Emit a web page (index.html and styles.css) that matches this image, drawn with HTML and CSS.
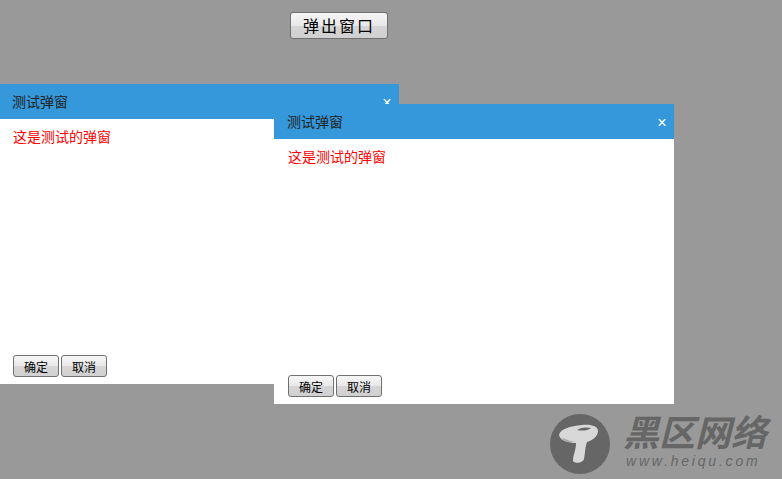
FILE: index.html
```html
<!DOCTYPE html>
<html lang="zh">
<head>
    <meta charset="UTF-8">
    <title>弹出窗口</title>
    <link rel="stylesheet" href="styles.css">
</head>
<body>

<div class="toolbar">
    <button class="open-button">弹出窗口</button>
</div>

<div class="dialog dialog-first">
    <div class="dialog-header">
        <span class="dialog-title">测试弹窗</span>
        <span class="dialog-close">×</span>
    </div>
    <div class="dialog-body">这是测试的弹窗</div>
    <div class="dialog-footer">
        <button class="dialog-button">确定</button>
        <button class="dialog-button">取消</button>
    </div>
</div>

<div class="dialog dialog-second">
    <div class="dialog-header">
        <span class="dialog-title">测试弹窗</span>
        <span class="dialog-close">×</span>
    </div>
    <div class="dialog-body">这是测试的弹窗</div>
    <div class="dialog-footer">
        <button class="dialog-button">确定</button>
        <button class="dialog-button">取消</button>
    </div>
</div>

<div class="watermark">
    <svg class="watermark-logo" width="60" height="60" viewBox="0 0 60 60">
        <circle cx="30" cy="30" r="30" fill="#666"/>
        <path d="M9 21 C10 15 20 12 32 11 C41 10 48 12 48 17 C48 22 43 26 37 28 C35 33 35 40 34 45 C33 49 25 50 23 47 C23 41 26 36 26 29 C19 29 10 27 9 21 Z" fill="#d8d8d8"/>
        <path d="M27 16 C31 13 37 13 41 14 C37 17 32 17 27 16 Z" fill="#666"/>
        <path d="M12 24 C17 25 21 28 26 28 C20 29 14 28 12 24 Z" fill="#aaa"/>
    </svg>
    <div class="watermark-text">
        <div class="watermark-name">黑区网络</div>
        <div class="watermark-url">www.heiqu.com</div>
    </div>
</div>

</body>
</html>
```

FILE: styles.css
```css
html, body {
    height: 100%;
}

body {
    margin: 0;
    overflow: hidden;
    background-color: #999;
    font-family: "Liberation Sans", "Noto Sans CJK SC", sans-serif;
    font-size: 14px;
}

.toolbar {
    padding: 12px 0 0 290px;
}

button {
    border: 1px solid #707070;
    border-radius: 3px;
    background: linear-gradient(to bottom, #f6f6f6 0%, #e8e8e8 50%, #d6d6d6 52%, #d0d0d0 100%);
    color: #000;
    font-family: "Noto Sans CJK SC", sans-serif;
    padding: 0;
}

.open-button {
    display: block;
    width: 98px;
    height: 27px;
    padding-bottom: 2px;
    font-size: 16px;
    letter-spacing: 2px;
}

.dialog {
    position: absolute;
    width: 400px;
    height: 300px;
    background-color: white;
    display: flex;
    flex-direction: column;
}

.dialog-first {
    left: -1px;
    top: 84px;
}

.dialog-second {
    left: 274px;
    top: 104px;
}

.dialog-header {
    height: 35px;
    background-color: #3498db;
    color: #222;
    display: flex;
    align-items: center;
    justify-content: space-between;
    padding: 0 6px 0 13px;
}

.dialog-title {
    margin-bottom: 1px;
}

.dialog-close {
    color: white;
    font-size: 16px;
    width: 12px;
    text-align: center;
    margin-top: 2px;
}

.dialog-body {
    flex: 1;
    padding: 7px 14px 0;
    color: red;
}

.dialog-footer {
    display: flex;
    gap: 2px;
    padding: 0 14px 7px;
}

.dialog-button {
    width: 46px;
    height: 22px;
    font-size: 12px;
}

.watermark {
    position: absolute;
    left: 550px;
    top: 414px;
    display: flex;
    gap: 13px;
}

.watermark-name {
    font-size: 36px;
    line-height: 40px;
    font-weight: bold;
    font-style: italic;
    color: #666;
    white-space: nowrap;
}

.watermark-url {
    font-size: 14px;
    line-height: 14px;
    font-style: italic;
    letter-spacing: 2.8px;
    margin-left: 3px;
    color: #666;
}
```
